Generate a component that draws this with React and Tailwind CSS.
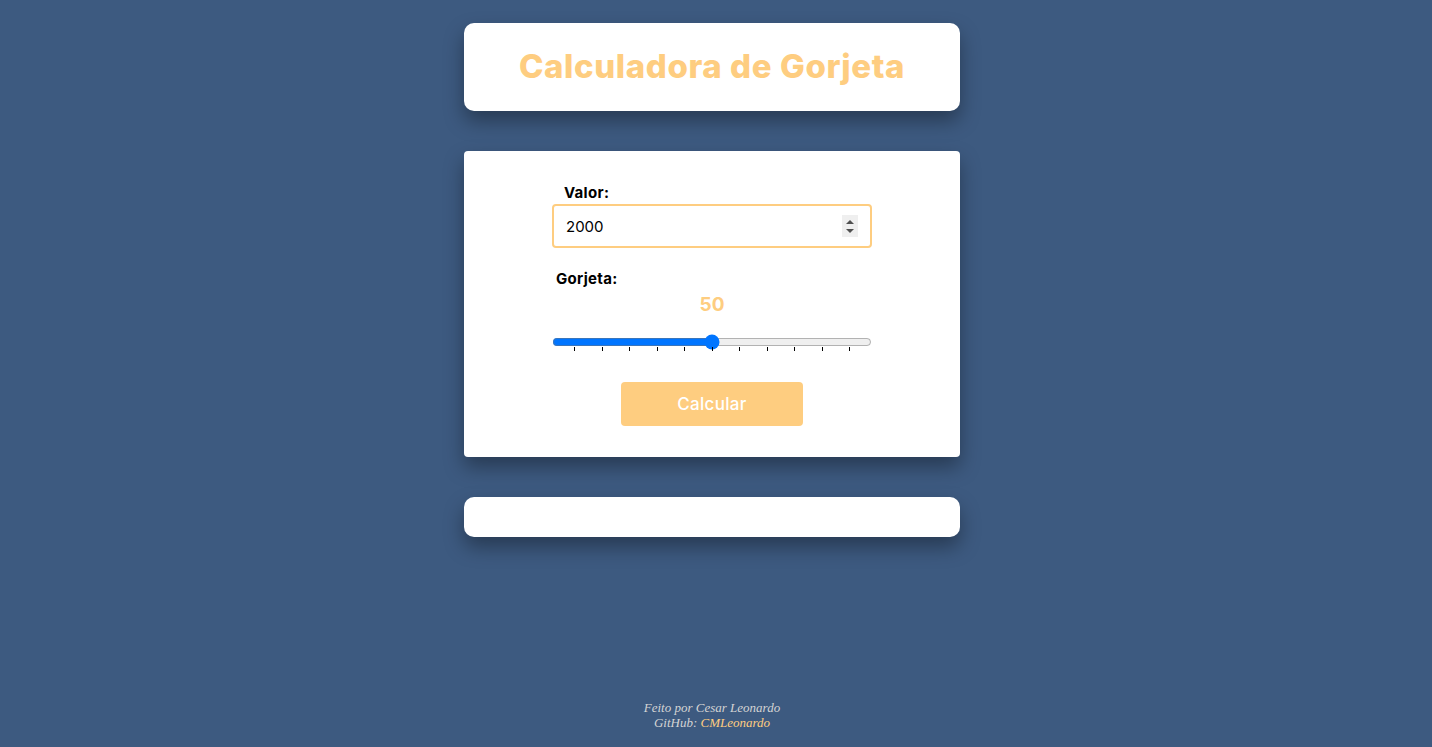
import React, { useState } from "react";

const ticks = [0, 1, 2, 3, 4, 5, 6, 7, 8, 9, 10];

export default function App() {
  const [valor, setValor] = useState(2000);
  const [gorjeta, setGorjeta] = useState(50);

  return (
    <div
      className="min-h-screen bg-[#3d5a80] flex flex-col items-center pr-[8px]"
      style={{ fontFamily: "Inter, 'Noto Sans', sans-serif" }}
    >
      <div className="mt-[23px] w-[496px] h-[88px] bg-white rounded-[10px] shadow-[0_10px_20px_rgba(0,0,0,0.35)] flex items-center justify-center">
        <h1 className="text-[33px] font-extrabold text-[#fecd80] tracking-[0.6px]">
          Calculadora de Gorjeta
        </h1>
      </div>

      <div className="mt-[40px] w-[496px] h-[306px] bg-white rounded-[4px] shadow-[0_10px_20px_rgba(0,0,0,0.35)] flex flex-col items-center pt-[32px]">
        <div className="w-[320px] flex flex-col">
          <label className="ml-[12px] text-[15px] font-bold text-black leading-[20px] tracking-[0.3px]">Valor:</label>
          <div className="mt-[1px] relative h-[44px]">
            <input
              type="number"
              value={valor}
              onChange={(e) => setValor(e.target.value)}
              className="h-[44px] w-[320px] border-2 border-[#fecd80] rounded-[4px] px-[12px] text-[15px] text-black outline-none [appearance:textfield] [&::-webkit-inner-spin-button]:appearance-none"
            />
            <div className="absolute left-[290px] top-[11px] w-[16px] h-[22px] bg-[#efefef] flex flex-col items-center justify-center gap-[5px]">
              <div className="w-0 h-0 border-l-[4px] border-r-[4px] border-b-[4px] border-l-transparent border-r-transparent border-b-[#505050]" />
              <div className="w-0 h-0 border-l-[4px] border-r-[4px] border-t-[4px] border-l-transparent border-r-transparent border-t-[#505050]" />
            </div>
          </div>
          <label className="mt-[21px] ml-[4px] text-[15px] font-bold text-black leading-[20px] tracking-[0.3px]">Gorjeta:</label>
          <div className="mt-[2px] text-center text-[19px] font-bold text-[#fecd80] leading-[27px]">{gorjeta}</div>
          <div className="mt-[14px] relative h-[20px]">
            <input
              type="range"
              min="0"
              max="100"
              step="10"
              value={gorjeta}
              onChange={(e) => setGorjeta(e.target.value)}
              className="w-[320px] m-0 accent-[#0075ff]"
            />
            <div className="absolute left-[22px] top-[15px] flex gap-[26.5px]">
              {ticks.map((t) => (
                <div key={t} className="w-px h-[4px] bg-black" />
              ))}
            </div>
          </div>
          <button className="mt-[30px] self-center w-[182px] h-[44px] bg-[#fecd80] rounded-[4px] text-white text-[17px] font-medium tracking-[0.3px] pt-[2px]">
            Calcular
          </button>
        </div>
      </div>

      <div className="mt-[40px] w-[496px] h-[40px] bg-white rounded-[10px] shadow-[0_10px_20px_rgba(0,0,0,0.35)]" />

      <footer
        className="mt-auto mb-[17px] text-center text-[13px] italic leading-[15px] text-[#d4d4d4]"
        style={{ fontFamily: "'Liberation Serif', serif" }}
      >
        <p>Feito por Cesar Leonardo</p>
        <p>
          GitHub: <a className="text-[#fecd80]">CMLeonardo</a>
        </p>
      </footer>
    </div>
  );
}
